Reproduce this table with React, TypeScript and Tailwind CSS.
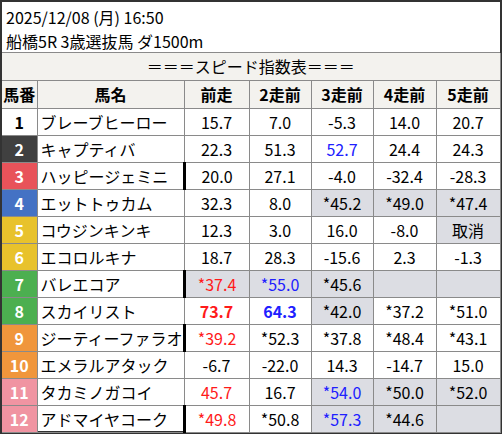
const FONT = { fontFamily: '"Noto Sans CJK JP", "Noto Sans", sans-serif' };

type Cell = { v: string; c?: "red" | "blue"; b?: boolean; g?: boolean };

const WAKU: Record<number, string> = {
  1: "bg-white text-black",
  2: "bg-[#404040] text-white",
  3: "bg-[#e8535a] text-white",
  4: "bg-[#4472c4] text-white",
  5: "bg-[#e8c22c] text-white",
  6: "bg-[#e8c22c] text-white",
  7: "bg-[#4caf50] text-white",
  8: "bg-[#4caf50] text-white",
  9: "bg-[#f0963c] text-white",
  10: "bg-[#f0963c] text-white",
  11: "bg-[#f094a2] text-white",
  12: "bg-[#f094a2] text-white",
};

const ROWS: { no: number; name: string; thick?: boolean; cells: Cell[] }[] = [
  { no: 1, name: "ブレーブヒーロー", cells: [{ v: "15.7" }, { v: "7.0" }, { v: "-5.3" }, { v: "14.0" }, { v: "20.7" }] },
  { no: 2, name: "キャプティバ", cells: [{ v: "22.3" }, { v: "51.3" }, { v: "52.7", c: "blue" }, { v: "24.4" }, { v: "24.3" }] },
  { no: 3, name: "ハッピージェミニ", thick: true, cells: [{ v: "20.0" }, { v: "27.1" }, { v: "-4.0" }, { v: "-32.4" }, { v: "-28.3" }] },
  { no: 4, name: "エットトゥカム", cells: [{ v: "32.3" }, { v: "8.0" }, { v: "*45.2", g: true }, { v: "*49.0", g: true }, { v: "*47.4", g: true }] },
  { no: 5, name: "コウジンキンキ", cells: [{ v: "12.3" }, { v: "3.0" }, { v: "16.0" }, { v: "-8.0" }, { v: "取消", g: true }] },
  { no: 6, name: "エコロルキナ", cells: [{ v: "18.7" }, { v: "28.3" }, { v: "-15.6" }, { v: "2.3" }, { v: "-1.3" }] },
  { no: 7, name: "バレエコア", thick: true, cells: [{ v: "*37.4", c: "red", g: true }, { v: "*55.0", c: "blue", g: true }, { v: "*45.6", g: true }, { v: "", g: true }, { v: "", g: true }] },
  { no: 8, name: "スカイリスト", cells: [{ v: "73.7", c: "red", b: true }, { v: "64.3", c: "blue", b: true }, { v: "*42.0", g: true }, { v: "*37.2" }, { v: "*51.0" }] },
  { no: 9, name: "ジーティーファラオ", thick: true, cells: [{ v: "*39.2", c: "red" }, { v: "*52.3" }, { v: "*37.8" }, { v: "*48.4" }, { v: "*43.1" }] },
  { no: 10, name: "エメラルアタック", cells: [{ v: "-6.7" }, { v: "-22.0" }, { v: "14.3" }, { v: "-14.7" }, { v: "15.0" }] },
  { no: 11, name: "タカミノガコイ", cells: [{ v: "45.7", c: "red" }, { v: "16.7" }, { v: "*54.0", c: "blue", g: true }, { v: "*50.0", g: true }, { v: "*52.0", g: true }] },
  { no: 12, name: "アドマイヤコーク", thick: true, cells: [{ v: "*49.8", c: "red" }, { v: "*50.8" }, { v: "*57.3", c: "blue", g: true }, { v: "*44.6", g: true }, { v: "", g: true }] },
];

const HEADS = ["前走", "2走前", "3走前", "4走前", "5走前"];

export default function App() {
  return (
    <div className="w-[502px] h-[434px] bg-white text-black overflow-hidden" style={FONT}>
      <div className="w-[502px] h-[434px] border-l-2 border-t-2 border-r-2 border-b-[3px] border-[#333333] bg-white">
        {/* title */}
        <div className="pt-[3px] pl-[4px] text-[16px] leading-[24px] h-[51px] border-b border-[#8a8a8a]">
          <div>2025/12/08 (月) 16:50</div>
          <div>船橋5R 3歳選抜馬 ダ1500m</div>
        </div>

        <table className="table-fixed border-collapse w-[498px] text-[16px]">
          <colgroup>
            <col className="w-[35px]" />
            <col className="w-[147px]" />
            <col className="w-[65px]" />
            <col className="w-[62px]" />
            <col className="w-[62px]" />
            <col className="w-[63px]" />
            <col className="w-[64px]" />
          </colgroup>
          <thead>
            <tr className="h-[27px]">
              <td colSpan={7} className="bg-[#f3f2ee] border-b border-r border-[#8a8a8a] text-center leading-none p-0">
                ＝＝＝スピード指数表＝＝＝
              </td>
            </tr>
            <tr className="h-[28px]">
              <th className="bg-[#f3f2ee] border-b border-r border-[#8a8a8a] p-0 font-bold leading-none text-center">馬番</th>
              <th className="bg-[#f3f2ee] border border-[#8a8a8a] p-0 font-bold leading-none text-center">馬名</th>
              {HEADS.map((h) => (
                <th key={h} className="bg-[#f3f2ee] border border-[#8a8a8a] p-0 font-bold leading-none text-center">
                  {h}
                </th>
              ))}
            </tr>
          </thead>
          <tbody>
            {ROWS.map((r) => (
              <tr key={r.no} className="h-[27px]">
                <td className={`border border-l-0 border-[#8a8a8a] p-0 text-center font-bold leading-none ${WAKU[r.no]}`}>
                  {r.no}
                </td>
                <td className="border border-[#8a8a8a] pl-[3px] pr-0 py-0 leading-none whitespace-nowrap">{r.name}</td>
                {r.cells.map((c, i) => (
                  <td
                    key={i}
                    className={`border border-[#8a8a8a] p-0 text-center leading-none ${c.g ? "bg-[#dcdde3]" : "bg-white"} ${
                      c.c === "red" ? "text-[#ff1a1a]" : c.c === "blue" ? "text-[#2020ff]" : "text-black"
                    } ${c.b ? "font-bold" : ""} ${i === 0 && r.thick ? "border-l-[3px] border-l-black" : ""}`}
                  >
                    {c.v}
                  </td>
                ))}
              </tr>
            ))}
          </tbody>
        </table>
      </div>
    </div>
  );
}
